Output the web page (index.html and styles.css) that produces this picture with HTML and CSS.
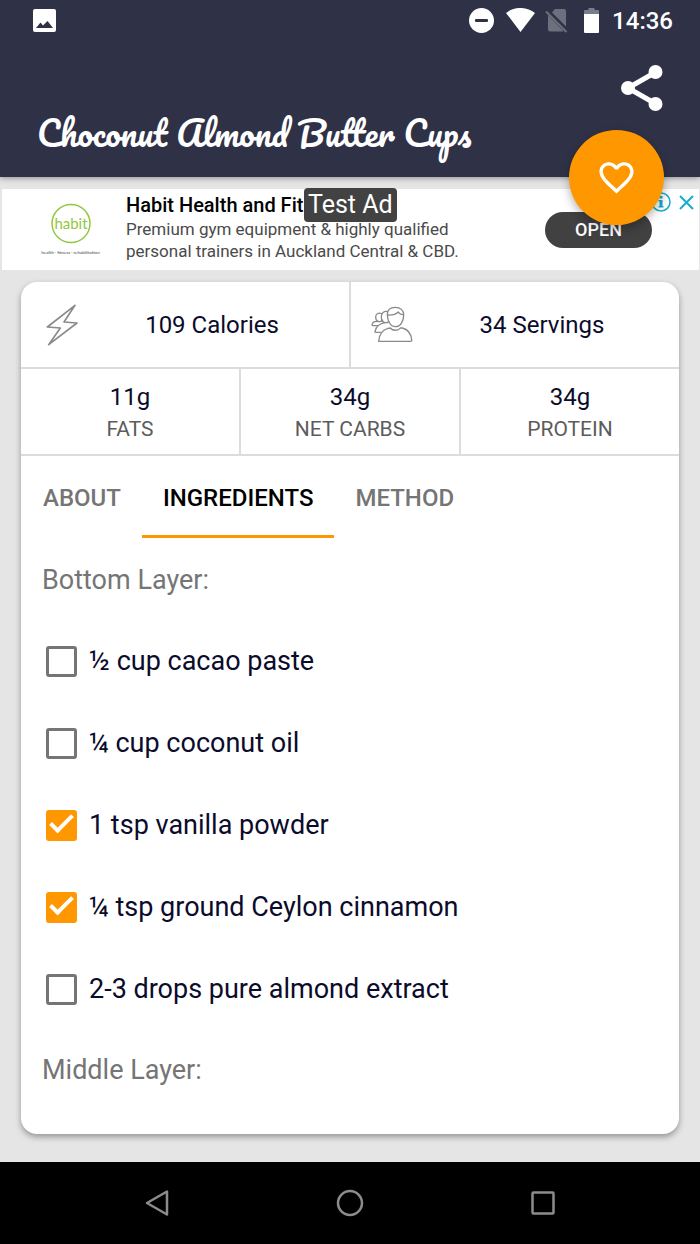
FILE: index.html
```html
<!DOCTYPE html>
<html lang="en">
<head>
    <meta charset="UTF-8">
    <meta name="viewport" content="width=device-width, initial-scale=1">
    <title>Choconut Almond Butter Cups</title>
    <link rel="stylesheet" href="styles.css">
</head>
<body>
    <header class="header">
        <!-- Status bar -->
        <div class="status-bar">
            <svg class="status-image" width="23" height="23" viewBox="0 0 23 23">
                <rect width="23" height="23" rx="2" fill="#fff"/>
                <path d="M3 19 L7.500 13.500 L10 16.500 L14.500 12 L20 19 Z" fill="#2f3147"/>
            </svg>
            <svg width="25" height="25" viewBox="0 0 25 25">
                <circle cx="12.500" cy="12.500" r="12.500" fill="#fff"/>
                <rect x="6" y="11" width="13" height="3" rx="1" fill="#2f3147"/>
            </svg>
            <svg class="status-wifi" width="29" height="25" viewBox="0 0 29 25">
                <path d="M0 5 C8 -1.700 21 -1.700 29 5 L14.500 24 Z" fill="#fff"/>
            </svg>
            <svg class="status-sim" width="23" height="25" viewBox="0 0 23 25">
                <path d="M7 4.500 L10 1 H19 Q21 1 21 3 V18.500 Z M3 7 L18.500 23 Q18 23.500 17 23.500 H5 Q3 23.500 3 21.500 Z" fill="#6d6f7e"/>
                <path d="M1 3.500 L21.500 24" stroke="#6d6f7e" stroke-width="2"/>
            </svg>
            <svg class="status-battery" width="15" height="25" viewBox="0 0 15 25">
                <path d="M4.500 0 H10.500 V2 H14 Q15 2 15 3 V6 H0 V3 Q0 2 1 2 H4.500 Z" fill="#7b7c8b"/>
                <path d="M0 6 H15 V24 Q15 25 14 25 H1 Q0 25 0 24 Z" fill="#fff"/>
            </svg>
            <span class="status-time">14:36</span>
        </div>

        <div class="header-actions">
            <button class="share-button" aria-label="Share">
                <svg width="42" height="46" viewBox="0 0 42 46">
                    <path d="M35 7 L7 23 L35 39" fill="none" stroke="#fff" stroke-width="5"/>
                    <circle cx="34.500" cy="7" r="7" fill="#fff"/>
                    <circle cx="7" cy="23" r="7" fill="#fff"/>
                    <circle cx="34.500" cy="39" r="7" fill="#fff"/>
                </svg>
            </button>
        </div>
        <h1 class="title">Choconut Almond Butter Cups</h1>

        <button class="favorite-button" aria-label="Add to favorites">
            <svg width="41" height="41" viewBox="0 0 24 24">
                <path fill="#fff" d="M16.500 3c-1.740 0-3.410.810-4.500 2.090C10.910 3.810 9.240 3 7.500 3 4.420 3 2 5.420 2 8.500c0 3.780 3.400 6.860 8.550 11.540L12 21.350l1.450-1.320C18.600 15.360 22 12.280 22 8.500 22 5.420 19.580 3 16.500 3zm-4.400 15.550l-.1.100-.1-.1C7.140 14.240 4 11.390 4 8.500 4 6.500 5.500 5 7.500 5c1.540 0 3.040.990 3.570 2.360h1.870C13.460 5.990 14.960 5 16.500 5c2 0 3.500 1.500 3.500 3.500 0 2.890-3.140 5.740-7.900 10.050z"/>
            </svg>
        </button>
    </header>

    <!-- Ad banner -->
    <aside class="ad">
        <svg class="ad-logo" width="62" height="54" viewBox="0 0 124 108">
            <circle cx="62" cy="41" r="38" fill="none" stroke="#93c83e" stroke-width="3"/>
            <text class="ad-logo-name" x="62" y="51" text-anchor="middle">habit</text>
            <text class="ad-logo-line" x="61" y="101" text-anchor="middle">health · fitness · rehabilitation</text>
        </svg>
        <div class="ad-text">
            <h2 class="ad-heading">Habit Health and Fit</h2>
            <p class="ad-copy">Premium gym equipment &amp; highly qualified<br>personal trainers in Auckland Central &amp; CBD.</p>
        </div>
        <button class="ad-open">OPEN</button>
        <span class="ad-badge">Test Ad</span>
        <div class="ad-choices">
            <svg width="20" height="20" viewBox="0 0 20 20">
                <circle cx="10" cy="10" r="9" fill="none" stroke="#18acd0" stroke-width="1.500"/>
                <path d="M8.500 4 H11.500 V6.500 H8.500 Z M7.500 8 H11.500 V14 H12.500 V15.500 H7.500 V14 H8.500 V9.500 H7.500 Z" fill="#18acd0"/>
            </svg>
            <svg width="15" height="15" viewBox="0 0 15 15">
                <path d="M1 1 L14 14 M14 1 L1 14" stroke="#18acd0" stroke-width="2"/>
            </svg>
        </div>
    </aside>

    <main class="card">
        <div class="stats">
            <div class="stat">
                <div class="stat-icon">
                    <svg width="32" height="42" viewBox="0 0 96 126">
                        <path d="M87 4 L4 69 L43 72 L8 122 L93 57 L54 54 Z" fill="none" stroke="#8a8a8a" stroke-width="5" stroke-linejoin="round"/>
                    </svg>
                </div>
                <span class="stat-text">109 Calories</span>
            </div>
            <div class="stat">
                <div class="stat-icon">
                    <svg width="42" height="37" viewBox="0 0 126 111">
                        <g fill="none" stroke="#8a8a8a" stroke-width="4" stroke-linecap="round" stroke-linejoin="round">
                            <path d="M23 106 H119 Q123 106 122 101 C120 82 111 70 94 66 L88 66 C82 75 65 75 58 66 L51 67 C34 71 25 84 23 106 Z"/>
                            <path d="M49 25 C49 10 60 4 73 4 C88 4 98 13 98 26 C98 45 89 62 73 62 C57 62 49 43 49 25 Z"/>
                            <path d="M50 27 C62 28 73 26 82 18 C85 24 91 26 97 26"/>
                            <path d="M50 17 C39 14 31 22 31 32 C31 43 37 50 45 50 C49 50 51 49 53 47"/>
                            <path d="M32 23 C22 19 14 24 14 33 C14 41 19 47 27 47 C31 47 33 45 35 43"/>
                            <path d="M43 50 C30 52 15 57 12 77 Q12 79 15 79 H28"/>
                            <path d="M21 47 C12 44 4 48 3 57 Q3 59 6 59 H20"/>
                        </g>
                    </svg>
                </div>
                <span class="stat-text">34 Servings</span>
            </div>
        </div>
        <div class="stats">
            <div class="macro">
                <span class="macro-value">11g</span>
                <span class="macro-label">FATS</span>
            </div>
            <div class="macro">
                <span class="macro-value">34g</span>
                <span class="macro-label">NET CARBS</span>
            </div>
            <div class="macro">
                <span class="macro-value">34g</span>
                <span class="macro-label">PROTEIN</span>
            </div>
        </div>

        <!-- Tab Navigation -->
        <nav class="tabs-nav">
            <button class="tab-button">ABOUT</button>
            <button class="tab-button active">INGREDIENTS</button>
            <button class="tab-button">METHOD</button>
        </nav>

        <!-- Tab Content -->
        <section class="tab-content">
            <h3 class="layer">Bottom Layer:</h3>
            <label class="ingredient"><input type="checkbox" class="checkbox">½ cup cacao paste</label>
            <label class="ingredient"><input type="checkbox" class="checkbox">¼ cup coconut oil</label>
            <label class="ingredient"><input type="checkbox" class="checkbox" checked>1 tsp vanilla powder</label>
            <label class="ingredient"><input type="checkbox" class="checkbox" checked>¼ tsp ground Ceylon cinnamon</label>
            <label class="ingredient"><input type="checkbox" class="checkbox">2-3 drops pure almond extract</label>
            <h3 class="layer">Middle Layer:</h3>
        </section>
    </main>

    <!-- System navigation -->
    <footer class="system-nav">
        <button class="system-button" aria-label="Back">
            <svg width="28" height="28" viewBox="0 0 28 28">
                <path d="M24 2.500 V25.500 L4 14 Z" fill="none" stroke="#8c8c8c" stroke-width="2.500" stroke-linejoin="round"/>
            </svg>
        </button>
        <button class="system-button" aria-label="Home">
            <svg width="28" height="28" viewBox="0 0 28 28">
                <circle cx="14" cy="14" r="12" fill="none" stroke="#8c8c8c" stroke-width="2.500"/>
            </svg>
        </button>
        <button class="system-button" aria-label="Recent apps">
            <svg width="28" height="28" viewBox="0 0 28 28">
                <rect x="3.500" y="3.500" width="21" height="21" rx="1" fill="none" stroke="#8c8c8c" stroke-width="2.500"/>
            </svg>
        </button>
    </footer>

    <script>
        // Switch the active tab on click
        const tabs = document.querySelectorAll('.tab-button');

        tabs.forEach(tab => {
            tab.addEventListener('click', () => {
                tabs.forEach(other => other.classList.remove('active'));
                tab.classList.add('active');
            });
        });
    </script>
</body>
</html>
```
FILE: styles.css
```css
* {
    box-sizing: border-box;
}

body {
    display: flex;
    flex-direction: column;
    min-height: 100vh;
    margin: 0;
    background: #e5e5e5;
    color: #0b0b2b;
    font-family: Roboto, "Liberation Sans", sans-serif;
}

h1, h2, h3, p {
    margin: 0;
}

button {
    padding: 0;
    border: none;
    background: none;
    font-family: inherit;
    cursor: pointer;
}

svg {
    display: block;
    flex: none;
}

/* Header */
.header {
    position: relative;
    z-index: 1;
    padding-bottom: 17px;
    background: #2f3147;
    box-shadow: 0 1px 6px rgba(0, 0, 0, 0.4);
    color: #fff;
}

.status-bar {
    display: flex;
    align-items: center;
    height: 41px;
    padding: 0 27px 0 33px;
}

.status-image {
    margin-right: auto;
}

.status-wifi {
    margin-left: 12px;
}

.status-sim {
    margin-left: 10px;
}

.status-battery {
    margin: 0 13px 0 16px;
}

.status-time {
    font-size: 24px;
    font-weight: 500;
}

.header-actions {
    display: flex;
    justify-content: flex-end;
    height: 64px;
    padding: 24px 37px 0;
}

.share-button {
    height: 46px;
}

.title {
    padding-left: 37px;
    font-family: Pacifico, cursive;
    font-size: 34px;
    font-weight: 400;
    line-height: 55px;
}

.favorite-button {
    position: absolute;
    right: 36px;
    bottom: -48px;
    display: flex;
    align-items: center;
    justify-content: center;
    width: 95px;
    height: 95px;
    border-radius: 50%;
    background: #ff9800;
    box-shadow: 0 4px 10px rgba(0, 0, 0, 0.3);
}

/* Ad banner */
.ad {
    position: relative;
    display: flex;
    align-items: center;
    height: 81px;
    margin: 12px 1px 0 2px;
    padding: 0 47px 0 38px;
    background: #fff;
}

.ad-logo-name {
    fill: #93c83e;
    font-family: Lato, sans-serif;
    font-size: 30px;
}

.ad-logo-line {
    fill: #444;
    font-family: Lato, sans-serif;
    font-size: 9px;
}

.ad-text {
    flex: 1;
    padding: 0 0 4px 24px;
}

.ad-heading {
    color: #000;
    font-size: 20px;
    font-weight: 500;
    line-height: 25px;
}

.ad-copy {
    color: #4a4a4a;
    font-size: 17px;
    line-height: 22px;
}

.ad-open {
    width: 107px;
    height: 36px;
    border-radius: 18px;
    background: #414141;
    color: #fff;
    font-size: 18px;
    font-weight: 500;
}

.ad-badge {
    position: absolute;
    top: -1px;
    left: 302px;
    padding: 0 4px;
    border-radius: 4px;
    background: #424242;
    color: #fff;
    font-size: 25px;
    line-height: 34px;
}

.ad-choices {
    position: absolute;
    top: 3px;
    right: 5px;
    display: flex;
    align-items: center;
    gap: 8px;
}

/* Recipe card */
.card {
    margin: 12px 21px 28px;
    padding-bottom: 24px;
    border-radius: 16px;
    background: #fff;
    box-shadow: 0 3px 6px rgba(0, 0, 0, 0.35);
}

.stats {
    display: flex;
    border-bottom: 2px solid #dcdcdc;
}

.stat,
.macro {
    flex: 1;
    display: flex;
    align-items: center;
}

.stat + .stat,
.macro + .macro {
    border-left: 2px solid #dcdcdc;
}

.stat {
    height: 85px;
}

.stat-icon {
    display: flex;
    justify-content: center;
    width: 82px;
}

.stat-text {
    flex: 1;
    padding-right: 28px;
    font-size: 24px;
    text-align: center;
}

.macro {
    flex-direction: column;
    justify-content: center;
    height: 85px;
}

.macro-value {
    font-size: 24px;
    line-height: 34px;
}

.macro-label {
    color: #5c5c5c;
    font-size: 21px;
    line-height: 30px;
}

/* Tabs */
.tabs-nav {
    display: flex;
    padding-left: 1px;
}

.tab-button {
    height: 82px;
    padding: 5px 21px 0;
    border-bottom: 3px solid transparent;
    color: #757575;
    font-size: 24px;
    font-weight: 500;
}

.tab-button.active {
    border-bottom-color: #ff9800;
    color: #000;
}

.tab-content {
    padding: 2px 21px 0;
}

.layer {
    color: #757575;
    font-size: 27px;
    font-weight: 400;
    line-height: 80px;
}

.ingredient {
    display: flex;
    align-items: center;
    gap: 12px;
    height: 82px;
    padding-left: 4px;
    font-size: 27px;
}

.checkbox {
    display: grid;
    place-items: center;
    width: 31px;
    height: 31px;
    margin: 0;
    border: 3px solid #757575;
    border-radius: 3px;
    appearance: none;
}

.checkbox:checked {
    border-color: #ff9800;
    background: #ff9800;
}

.checkbox:checked::before {
    content: "";
    box-sizing: border-box;
    width: 23px;
    height: 12px;
    margin-bottom: 8px;
    border: solid #fff;
    border-width: 0 0 4px 4px;
    transform: rotate(-45deg);
}

/* System navigation */
.system-nav {
    display: flex;
    justify-content: center;
    height: 82px;
    margin-top: auto;
    background: #000;
}

.system-button {
    display: flex;
    align-items: center;
    justify-content: center;
    width: 193px;
}
```
